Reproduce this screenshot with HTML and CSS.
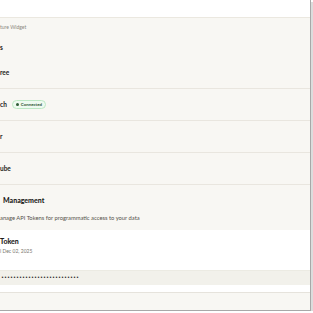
FILE: index.html
```html
<!DOCTYPE html>
<html lang="en">
<head>
  <meta charset="UTF-8">
  <meta name="viewport" content="width=device-width, initial-scale=1.0">
  <title>Settings</title>
  <link rel="stylesheet" href="styles.css">
</head>
<body>
  <div class="frame">
    <!-- Top bar -->
    <header class="topbar"></header>

    <!-- Integrations -->
    <div class="section-head">
      <div class="label">ture Widget</div>
      <div class="title">s</div>
    </div>

    <div class="row"><span class="name">ree</span></div>
    <div class="row">
      <span class="name">ch</span>
      <span class="badge"><span class="dot"></span>Connected</span>
    </div>
    <div class="row"><span class="name">r</span></div>
    <div class="row"><span class="name">ube</span></div>

    <!-- API tokens -->
    <div class="tokens-head">
      <div class="heading">Management</div>
      <div class="desc">anage API Tokens for programmatic access to your data</div>
    </div>

    <div class="token-card">
      <div class="token-name">Token</div>
      <div class="token-date">l Dec 02, 2025</div>
      <div class="token-field">••••••••••••••••••••••••••</div>
    </div>
  </div>
</body>
</html>
```

FILE: styles.css
```css
/* General */
body {
  margin: 0;
  background: #fff;
  font-family: 'Lato', 'Liberation Sans', sans-serif;
  color: #1e1d1a;
}

.frame {
  box-sizing: border-box;
  width: 311px;
  height: 311px;
  background: #f8f7f3;
  border-right: 1px solid #a8a8a8;
  border-bottom: 1px solid #a8a8a8;
  box-shadow: 2px 2px 0 #dcdcdc;
  overflow: hidden;
  display: flex;
  flex-direction: column;
}

/* Top bar */
.topbar {
  height: 17px;
  flex-shrink: 0;
  background: #fff;
  border-bottom: 1px solid #ebe8e0;
}

/* Integrations */
.section-head {
  height: 39px;
  flex-shrink: 0;
  box-sizing: border-box;
  padding-top: 5px;
}

.label {
  font-size: 5px;
  line-height: 8px;
  color: #8b8880;
}

.title {
  margin-top: 12px;
  font-size: 6.5px;
  line-height: 9px;
  font-weight: 700;
}

.row {
  height: 31px;
  flex-shrink: 0;
  border-bottom: 1px solid #e9e6df;
  display: flex;
  align-items: center;
  gap: 5px;
}

.name {
  font-size: 6.5px;
  font-weight: 700;
}

.badge {
  display: flex;
  align-items: center;
  gap: 2px;
  height: 7px;
  padding: 0 3px;
  border: 1px solid #bde8c4;
  border-radius: 5px;
  background: #eefaf0;
  color: #2e5334;
  font-size: 4.4px;
  font-weight: 700;
}

.dot {
  width: 3px;
  height: 3px;
  border-radius: 50%;
  background: #2f5c36;
}

/* API tokens */
.tokens-head {
  flex-shrink: 0;
  padding: 10px 0 8px;
}

.heading {
  font-size: 7px;
  line-height: 10px;
  font-weight: 900;
  padding-left: 3px;
}

.desc {
  margin-top: 9px;
  font-size: 5.8px;
  line-height: 8px;
  color: #55524b;
}

.token-card {
  flex-shrink: 0;
  background: #fff;
  padding: 6px 0 7px;
  border-bottom: 1px solid #e6e3dc;
}

.token-name {
  font-size: 7px;
  line-height: 10px;
  font-weight: 900;
}

.token-date {
  margin-top: 2px;
  font-size: 5px;
  line-height: 7px;
  color: #7b786f;
}

.token-field {
  margin-top: 15px;
  height: 15px;
  box-sizing: border-box;
  border-top: 1px solid #ecebe3;
  background: #f2f1eb;
  display: flex;
  align-items: center;
  padding-left: 1px;
  font-family: 'Liberation Mono', monospace;
  font-size: 5px;
  font-weight: 700;
  color: #2a2925;
}
```
